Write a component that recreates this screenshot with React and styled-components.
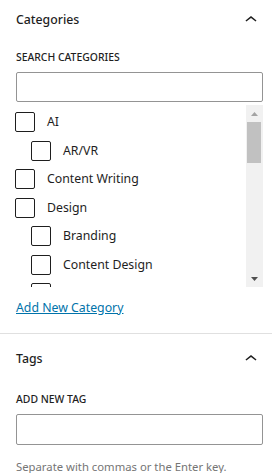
import React from "react";
import styled, { createGlobalStyle } from "styled-components";

const CATEGORIES = [
  { name: "AI", level: 0 },
  { name: "AR/VR", level: 1 },
  { name: "Content Writing", level: 0 },
  { name: "Design", level: 0 },
  { name: "Branding", level: 1 },
  { name: "Content Design", level: 1 },
  { name: "Graphic Design", level: 1 },
];

const GlobalStyle = createGlobalStyle`
  html, body {
    margin: 0;
    padding: 0;
    background: #ffffff;
  }
  body {
    font-family: "Segoe UI", "Noto Sans", sans-serif;
    color: #1e1e1e;
    -webkit-font-smoothing: antialiased;
  }
`;

function ChevronUp() {
  return (
    <svg width="24" height="24" viewBox="0 0 24 24" aria-hidden="true">
      <path d="M6.5 12.4L12 8l5.5 4.4-.9 1.2L12 10l-4.6 3.6-1-1.2z" fill="#1e1e1e" />
    </svg>
  );
}

function Arrow({ down, color }) {
  return (
    <svg width="7" height="4" viewBox="0 0 7 4" aria-hidden="true">
      <polygon points={down ? "0,0 7,0 3.5,4" : "0,4 7,4 3.5,0"} fill={color} />
    </svg>
  );
}

export default function App() {
  return (
    <Sidebar>
      <GlobalStyle />
      <Panel>
        <PanelHeader $height={40}>
          <PanelTitle>Categories</PanelTitle>
          <ToggleBtn type="button" aria-label="Collapse">
            <ChevronUp />
          </ToggleBtn>
        </PanelHeader>

        <FieldLabel>Search Categories</FieldLabel>
        <TextInput type="text" />

        <TermsBox>
          <TermsList>
            {CATEGORIES.map((c) => (
              <TermRow key={c.name} $level={c.level}>
                <Checkbox type="checkbox" />
                <TermLabel>{c.name}</TermLabel>
              </TermRow>
            ))}
          </TermsList>
          <ScrollTrack>
            <ScrollBtn>
              <Arrow color="#a3a3a3" />
            </ScrollBtn>
            <ScrollThumb />
            <ScrollRest />
            <ScrollBtn>
              <Arrow down color="#505050" />
            </ScrollBtn>
          </ScrollTrack>
        </TermsBox>

        <AddLink href="#">Add New Category</AddLink>
      </Panel>

      <Panel $last>
        <PanelHeader $height={50}>
          <PanelTitle>Tags</PanelTitle>
          <ToggleBtn type="button" aria-label="Collapse">
            <ChevronUp />
          </ToggleBtn>
        </PanelHeader>

        <FieldLabel $top={7}>Add New Tag</FieldLabel>
        <TextInput type="text" $height={31} />
        <Help>Separate with commas or the Enter key.</Help>
      </Panel>
    </Sidebar>
  );
}

const Sidebar = styled.div`
  width: 272px;
  min-height: 473px;
  background: #ffffff;
  overflow: hidden;
`;

const Panel = styled.section`
  display: flex;
  flex-direction: column;
  padding: 0 9px ${({ $last }) => ($last ? "0" : "15px")} 16px;
  border-bottom: ${({ $last }) => ($last ? "none" : "1px solid #e0e0e0")};
`;

const PanelHeader = styled.div`
  height: ${({ $height }) => $height}px;
  display: flex;
  align-items: center;
  justify-content: space-between;
`;

const PanelTitle = styled.h2`
  margin: 0;
  font-size: 12.3px;
  font-weight: 500;
  line-height: 20px;
  color: #1e1e1e;
`;

const ToggleBtn = styled.button`
  width: 24px;
  height: 24px;
  padding: 0;
  border: none;
  background: transparent;
  display: flex;
  align-items: center;
  justify-content: center;
  cursor: pointer;
`;

const FieldLabel = styled.label`
  display: block;
  margin: ${({ $top }) => $top ?? 9}px 0 7px;
  font-size: 10.4px;
  font-weight: 500;
  line-height: 16px;
  text-transform: uppercase;
  color: #1e1e1e;
`;

const TextInput = styled.input`
  box-sizing: border-box;
  width: 100%;
  height: ${({ $height }) => $height || 30}px;
  margin: 0;
  padding: 6px 8px;
  border: 1px solid #949494;
  border-radius: 2px;
  background: #ffffff;
  font-family: inherit;
  font-size: 13px;
  outline: none;
`;

const TermsBox = styled.div`
  margin: 3px 0 0 -1px;
  height: 182px;
  display: flex;
`;

const TermsList = styled.div`
  flex: 1;
  overflow: hidden;
  padding-top: 7px;
  display: flex;
  flex-direction: column;
  gap: 8.5px;
`;

const TermRow = styled.div`
  display: flex;
  align-items: center;
  gap: 12px;
  padding-left: ${({ $level }) => $level * 16}px;
  flex-shrink: 0;
  height: 20px;
`;

const Checkbox = styled.input`
  appearance: none;
  box-sizing: border-box;
  width: 20px;
  height: 20px;
  margin: 0;
  border: 1px solid #1e1e1e;
  border-radius: 2px;
  background: #ffffff;
  flex-shrink: 0;
`;

const TermLabel = styled.span`
  font-size: 12.3px;
  line-height: 20px;
  color: #1e1e1e;
`;

const ScrollTrack = styled.div`
  width: 17px;
  background: #f1f1f1;
  display: flex;
  flex-direction: column;
`;

const ScrollBtn = styled.div`
  height: 17px;
  display: flex;
  align-items: center;
  justify-content: center;
`;

const ScrollThumb = styled.div`
  height: 41px;
  margin: 0 2px 0 1px;
  background: #c1c1c1;
`;

const ScrollRest = styled.div`
  flex: 1;
`;

const AddLink = styled.a`
  align-self: flex-start;
  margin-top: 11px;
  font-size: 12.3px;
  line-height: 20px;
  color: #0073aa;
  text-decoration: underline;
`;

const Help = styled.p`
  margin: 14px 0 0;
  font-size: 11.3px;
  line-height: 16px;
  color: #757575;
`;
